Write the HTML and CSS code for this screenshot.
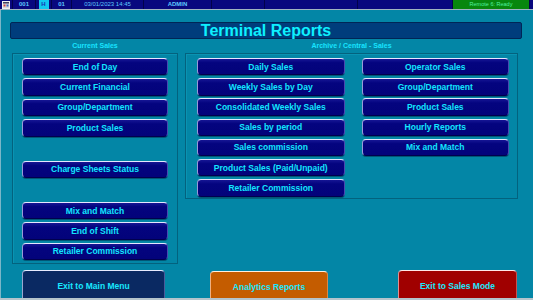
FILE: index.html
```html
<!DOCTYPE html>
<html>
<head>
<meta charset="utf-8">
<link rel="stylesheet" href="styles.css">
</head>
<body>
<div class="topbar">
  <div class="seg seg-icon">
    <svg width="8" height="8" viewBox="0 0 8 8">
      <rect x="0.5" y="0.5" width="7" height="7" fill="#d8d8d8" stroke="#f0f0f0"/>
      <rect x="1" y="1" width="6" height="1.5" fill="#404060"/>
      <rect x="1.5" y="3.5" width="2" height="2" fill="#d04040"/>
      <rect x="4.5" y="3.5" width="2" height="2" fill="#4060c0"/>
    </svg>
  </div>
  <div class="seg seg-a">001</div>
  <div class="seg seg-b"><span class="hbox">H</span></div>
  <div class="seg seg-c">01</div>
  <div class="seg seg-d">03/01/2023 14:45</div>
  <div class="seg seg-e">ADMIN</div>
  <div class="seg seg-f"></div>
  <div class="seg seg-g"></div>
  <div class="seg seg-h"></div>
  <div class="seg seg-status">Remote 6: Ready</div>
  <div class="seg seg-end"></div>
</div>
<div class="screen">
  <div class="title">Terminal Reports</div>
  <div class="columns">
    <div class="col col-left">
      <div class="label">Current Sales</div>
      <div class="panel panel-left">
        <div class="btn">End of Day</div>
        <div class="btn">Current Financial</div>
        <div class="btn">Group/Department</div>
        <div class="btn">Product Sales</div>
        <div class="btn spaced">Charge Sheets Status</div>
        <div class="btn spaced">Mix and Match</div>
        <div class="btn">End of Shift</div>
        <div class="btn">Retailer Commission</div>
      </div>
    </div>
    <div class="col col-right">
      <div class="label">Archive / Central - Sales</div>
      <div class="panel panel-right">
        <div class="stack">
          <div class="btn">Daily Sales</div>
          <div class="btn">Weekly Sales by Day</div>
          <div class="btn">Consolidated Weekly Sales</div>
          <div class="btn">Sales by period</div>
          <div class="btn">Sales commission</div>
          <div class="btn">Product Sales (Paid/Unpaid)</div>
          <div class="btn">Retailer Commission</div>
        </div>
        <div class="stack">
          <div class="btn">Operator Sales</div>
          <div class="btn">Group/Department</div>
          <div class="btn">Product Sales</div>
          <div class="btn">Hourly Reports</div>
          <div class="btn">Mix and Match</div>
        </div>
      </div>
    </div>
  </div>
  <div class="footer">
    <div class="big big-main">Exit to Main Menu</div>
    <div class="big big-analytics">Analytics Reports</div>
    <div class="big big-sales">Exit to Sales Mode</div>
  </div>
</div>
<div class="bottomstrip"></div>
</body>
</html>
```

FILE: styles.css
```css
html, body {
  margin: 0;
  padding: 0;
  width: 533px;
  height: 300px;
  overflow: hidden;
  background: #0386a6;
  font-family: "Liberation Sans", Arial, sans-serif;
}

.topbar {
  display: flex;
  height: 9px;
  background: #08087e;
  border-bottom: 1px solid #9fb4c0;
  color: #5ec8ff;
  font-size: 6px;
  line-height: 9px;
}

.seg {
  display: flex;
  align-items: center;
  justify-content: center;
  border-right: 1px solid #02024a;
  box-sizing: border-box;
  white-space: nowrap;
}

.seg-icon { width: 13px; }
.seg-a { width: 23px; font-weight: bold; }
.seg-b { width: 16px; }
.seg-c { width: 20px; font-weight: bold; }
.seg-d { width: 72px; }
.seg-e { width: 68px; font-weight: bold; }
.seg-f { width: 53px; }
.seg-g { width: 93px; }
.seg-h { width: 95px; }
.seg-status {
  width: 77px;
  background: #07870d;
  color: #52f0a0;
  font-size: 5.5px;
}
.seg-end { flex: 1; border-right: none; }

.hbox {
  display: block;
  width: 10px;
  height: 9px;
  background: #10c8f0;
  color: #1830b0;
  text-align: center;
  font-weight: bold;
}

.screen {
  height: 288px;
  border-left: 1px solid #7ab6c8;
  padding: 12px 0 0 0;
  box-sizing: border-box;
}

.title {
  margin: 0 11px 0 9px;
  height: 17px;
  box-sizing: border-box;
  background: #003d7c;
  border: 1px solid #002656;
  border-radius: 2px;
  color: #0ef0ff;
  font-size: 16px;
  font-weight: bold;
  text-align: center;
  line-height: 15px;
}

.columns {
  display: flex;
  align-items: flex-start;
  padding-left: 11px;
  gap: 7px;
}

.label {
  height: 14px;
  line-height: 14px;
  color: #18e4ff;
  font-size: 7px;
  font-weight: bold;
  text-align: center;
}

.col-left { width: 166px; }
.col-right { width: 333px; }

.panel {
  box-sizing: border-box;
  border: 1px solid #03627e;
  box-shadow: inset 1px 1px 0 #0a93b2;
}

.panel-left {
  height: 211px;
  padding: 4px 9px 0 9px;
  display: flex;
  flex-direction: column;
  gap: 3px;
}

.panel-left .spaced { margin-top: 21px; }

.panel-right {
  height: 146px;
  padding: 4px 8px 0 11px;
  display: flex;
  gap: 17px;
}

.stack {
  width: 148px;
  display: flex;
  flex-direction: column;
  gap: 2.8px;
}

.btn {
  height: 17.4px;
  box-sizing: border-box;
  background: linear-gradient(#161694 0, #04047f 25%, #03037a 100%);
  border: 1px solid;
  border-color: #e6e6ff #4848b0 #00004e #9a9ad8;
  border-radius: 4px;
  box-shadow: 0 1px 0 rgba(0, 30, 60, 0.45);
  color: #12e6ff;
  font-size: 8.5px;
  font-weight: bold;
  display: flex;
  align-items: center;
  justify-content: center;
  white-space: nowrap;
}

.footer {
  display: flex;
  margin-top: 6px;
  padding-left: 21px;
}

.big {
  height: 30px;
  box-sizing: border-box;
  border: 1px solid;
  border-bottom: none;
  border-radius: 4px 4px 0 0;
  color: #18e8ff;
  font-size: 8.5px;
  font-weight: bold;
  display: flex;
  align-items: center;
  justify-content: center;
  white-space: nowrap;
}

.big-main {
  width: 143px;
  background: #0a2962;
  border-color: #e8ecff #4a5a9a #0a2962 #9aa6d0;
}

.big-analytics {
  width: 118px;
  margin-left: 45px;
  margin-top: 1px;
  background: #c45c00;
  border-color: #fff0e0 #d88848 #c45c00 #f0b080;
}

.big-sales {
  width: 119px;
  margin-left: 70px;
  background: #a00000;
  border-color: #ffe8e8 #c85050 #a00000 #e09090;
}

.bottomstrip {
  position: absolute;
  left: 0;
  top: 298px;
  width: 533px;
  height: 2px;
  background: #b4c4cc;
}
```
